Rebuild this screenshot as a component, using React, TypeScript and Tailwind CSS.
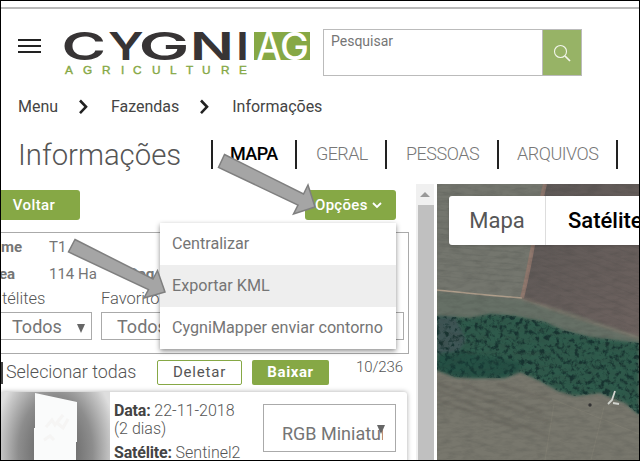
import React from "react";

const crumbs = ["Menu", "Fazendas", "Informações"];

function Logo() {
  return (
    <svg width="250" height="48" viewBox="62 29 250 48" className="ml-[21px] mt-[25px] shrink-0 overflow-visible">
      <g fontFamily="Inter, sans-serif" fontWeight="600" fontSize="38.5" fill="#373435">
        <text transform="translate(61.5 59.8) scale(1.57 1)">C</text>
        <text transform="translate(108 59.8) scale(1.3 1)">Y</text>
        <text transform="translate(138.5 59.8) scale(1.77 1)">G</text>
        <text transform="translate(190 59.8) scale(1.5 1)">N</text>
        <text transform="translate(236 59.8) scale(1.22 1)">I</text>
      </g>
      <rect x="254" y="32" width="56" height="28" fill="#86a845" />
      <g fontFamily="Inter, sans-serif" fontSize="37.500" fontWeight="500" fill="#fff">
        <text x="256.500" y="59.8" textLength="25" lengthAdjust="spacingAndGlyphs">A</text>
        <text x="280" y="59.8" textLength="29" lengthAdjust="spacingAndGlyphs">G</text>
      </g>
      <text x="65 83 102 121 133 152 170 186 202 221 239" y="74" fontFamily="Liberation Sans, sans-serif" fontSize="11.8" fill="#86a845" stroke="#86a845" strokeWidth=".4">AGRICULTURE</text>
    </svg>
  );
}

function Header() {
  return (
    <header className="flex h-[78px] items-start">
      <div className="ml-[17px] mt-[35px] flex w-[23px] shrink-0 flex-col gap-[4px] [&>i]:h-[2px] [&>i]:bg-[#222]">
        <i /><i /><i />
      </div>
      <Logo />
      <div className="ml-[11px] mt-[25px] flex h-[47px] w-[259px] shrink-0 border border-[#bbb]">
        <div className="flex-1 pl-[7px] pt-[2px] text-[14px] leading-[18px] text-[#757575]">Pesquisar</div>
        <div className="flex w-[39px] items-center justify-center border-l border-[#bbb] bg-[#97b366]">
          <svg width="18" height="18" viewBox="0 0 18 18" fill="none" stroke="#f2f6eb" strokeWidth="1.1">
            <circle cx="7.5" cy="7.500" r="6" /><path d="M12 12 17 17" strokeWidth="1.7" />
          </svg>
        </div>
      </div>
    </header>
  );
}

function Breadcrumbs() {
  return (
    <nav className="ml-[17px] mt-[14px] flex h-[22px] items-center text-[16px] text-[#444]">
      {crumbs.map((c, i) => (
        <React.Fragment key={c}>
          {i > 0 && (
            <svg width="11" height="16" viewBox="0 0 11 16" className="ml-[20px] mr-[22px]" fill="none" stroke="#222" strokeWidth="2.6"><path d="m2 1.5 6 6.3-6 6.3" /></svg>
          )}
          <span className="tracking-[-0.02px]">{c}</span>
        </React.Fragment>
      ))}
    </nav>
  );
}

function Titles() {
  return (
    <div className="mt-[20px] flex h-[45px] items-start">
      <h1 className="ml-[17px] w-[193px] text-[29.3px] font-light leading-[35px] text-[#555]">Informações</h1>
      <div className="mt-[2px] flex h-[29px] items-center text-[18px] font-light leading-[28px] text-[#777]">
        <span className="h-full w-[84px] border-l-2 border-[#222] pl-[17px] font-medium text-black"><span className="tracking-[-0.6px]">MAPA</span></span>
        <span className="h-full w-[90px] border-l-2 border-[#222] pl-[19px] tracking-[-0.6px]">GERAL</span>
        <span className="h-full w-[112px] border-l-2 border-[#222] pl-[19px] tracking-[-0.5px]">PESSOAS</span>
        <span className="h-full w-[119px] border-l-2 border-[#222] pl-[18px] tracking-[-0.5px]">ARQUIVOS</span>
        <span className="h-full w-[2px] bg-[#222]" />
      </div>
    </div>
  );
}

function Filters() {
  return (
    <section className="mt-[12px] h-[122px] w-[408px] border-y border-r border-[#aaa] text-[#757575]">
      <div className="flex h-[28px] items-center text-[15px]"><b className="w-[48px] font-bold">me</b><span>T1</span></div>
      <div className="flex h-[26px] items-center text-[15px]"><b className="-ml-[2px] w-[50px] font-bold">ea</b><span className="w-[79px]">114 Ha</span><b className="font-bold">Reg</b></div>
      <div className="flex h-[25px] items-center text-[16.5px] font-light text-[#555]"><span className="w-[100px] pl-[1px]">télites</span><span>Favoritos</span></div>
      <div className="flex gap-[9px] text-[18px]">
        <div className="flex h-[28px] w-[91px] items-center border-y border-r border-[#aaa] pl-[11px]"><span className="w-[65px]">Todos</span><span className="mt-1 h-0 w-0 border-x-[4.5px] border-t-[9px] border-x-transparent border-t-[#666]" /></div>
        <div className="flex h-[28px] w-[303px] items-center border border-[#aaa] pl-[15px]">Todos</div>
      </div>
    </section>
  );
}

function Card() {
  return (
    <section className="mt-[6px] flex h-[80px] w-[406px] rounded-tr-[3px] bg-white shadow-[0_0_5px_#aaa]">
      <div className="h-full w-[109px] shrink-0 bg-[radial-gradient(ellipse_62px_95px_at_50%_75%,#666_20%,#8d8d8d_60%,#c8c8c8_90%,#dedede)]">
        <svg width="109" height="80" viewBox="0 0 109 80">
          <path d="m34 1 42 9v40h-1v30H33V36h1Z" fill="#fafbfb" />
          <path d="m45 35 6-7 3 5 8-10M43 48l6-4 4 4M55 30l7 6 5-9" stroke="#f1efee" strokeWidth="3" fill="none" opacity=".5" />
        </svg>
      </div>
      <div className="ml-[4px] mt-[10px] w-[149px] text-[16px] font-light leading-[18px] text-[#555]">
        <p><b className="font-bold tracking-[-0.2px] text-[#444]">Data:</b> 22-11-2018</p><p>(2 dias)</p>
        <p className="mt-[6px] whitespace-nowrap"><b className="font-bold tracking-[-0.2px] text-[#444]">Satélite:</b> Sentinel2</p>
      </div>
      <div className="w-[133px]">
        <div className="mt-[12px] flex h-[48px] items-start border border-[#aaa] pl-[18px] pt-[15px] text-[18px] leading-[28px] text-[#757575]">
          <span className="w-[101px] shrink-0 overflow-hidden whitespace-nowrap">RGB Miniatura</span><span className="-ml-[6px] mt-[5px] h-0 w-0 shrink-0 border-x-[4.5px] border-t-[9px] border-x-transparent border-t-[#666]" />
        </div>
        <div className="ml-[41px] mt-[8px] h-[10px] w-[92px] rounded bg-[#c5c9a5]" />
      </div>
    </section>
  );
}

function SidePanel() {
  return (
    <aside className="w-[415px] shrink-0 overflow-hidden">
      <div className="mt-[6px] flex h-[30px] justify-between pr-[20px] text-[15px] font-medium text-white">
        <button className="w-[79px] rounded-r-[3px] bg-[#86a845] pr-[13px] tracking-[0.4px]">Voltar</button>
        <button className="flex w-[91px] items-center rounded-[3px] bg-[#86a845] pl-[10px] tracking-[0.3px]">Opções<svg className="ml-[4px] mt-[1px]" width="10" height="8" fill="none" stroke="#fff" strokeWidth="1.800"><path d="m1 1 4 4 4-4" /></svg></button>
      </div>
      <Filters />
      <div className="mt-[5px] flex h-[27px] items-center text-[#555]">
        <i className="h-[22px] w-[2px] shrink-0 bg-[#444]" />
        <span className="ml-[3px] w-[151px] text-[17.9px] font-light">Selecionar todas</span>
        <span className="flex h-[25px] w-[85px] items-center justify-center rounded-[2px] border border-[#86a845] text-[15px] tracking-[0.8px]">Deletar</span>
        <span className="ml-[10px] flex h-[25px] w-[77px] items-center justify-center rounded-[2px] bg-[#86a845] text-[15px] font-bold tracking-[0.6px] text-white">Baixar</span>
        <span className="mb-[10px] ml-[27px] text-[15px] font-light tracking-[-0.1px]">10/236</span>
      </div>
      <Card />
    </aside>
  );
}

function SatelliteMap() {
  const trees = "M437 316 470 318 490 314 515 316 545 322 562 330 590 337 639 343V415L625 403 600 393 575 396 558 391 540 381 520 372 505 378 475 378 455 377 437 370Z";
  return (
    <svg width="202" height="276" viewBox="437 184 202 276" className="block">
      <defs>
        <filter id="grain" x="0" y="0" width="1" height="1" colorInterpolationFilters="sRGB"><feTurbulence type="fractalNoise" baseFrequency=".08 .25" numOctaves="4" seed="4" /><feColorMatrix values="0 0 0 0 .2  0 0 0 0 .21  0 0 0 0 .2  1.2 1 0 0 -.9" /></filter>
        <filter id="foliage" x="0" y="0" width="1" height="1" colorInterpolationFilters="sRGB"><feTurbulence type="fractalNoise" baseFrequency=".2" numOctaves="4" seed="8" /><feColorMatrix values="0 0 0 0 .09  0 0 0 0 .2  0 0 0 0 .19  3 2 0 0 -2.4" /><feComposite in2="SourceGraphic" operator="in" /><feGaussianBlur stdDeviation=".5" /></filter>
        <filter id="soft" x="-.1" y="-.1" width="1.2" height="1.2"><feGaussianBlur stdDeviation="1.5" /></filter>
        <linearGradient id="soil" x1="0" y1="0" x2="1" y2="1"><stop stopColor="#5c5755" /><stop offset="1" stopColor="#6d625f" /></linearGradient>
      </defs>
      <path fill="#78776d" d="M437 184h202v276H437z" />
      <path fill="#74766e" d="M437 184h106l-23 117-83-11z" />
      <path fill="url(#soil)" d="M545 184h94v153l-69-22-47-16z" />
      <path d="M437 291 521 299 570 313 639 337V354L560 336 500 322H437Z" fill="#666f66" filter="url(#soft)" />
      <path d="M545 184c-9 36-12 70-23 114" stroke="#94796e" strokeWidth="4" fill="none" opacity=".85" />
      <path d="m437 290 50 5 35 3" stroke="#b1a08d" strokeWidth="1.4" fill="none" />
      <path d="m522 298 48 17 69 23" stroke="#8c7c70" strokeWidth="2" fill="none" opacity=".7" filter="url(#soft)" />
      <g stroke="#53504e" opacity=".15">{Array.from({ length: 15 }, (_, i) => <path key={i} d={`m${550 - i} ${187 + i * 7} ${90 + i} ${30 + i}`} />)}</g>
      <g stroke="#555b55" opacity=".15">{Array.from({ length: 15 }, (_, i) => <path key={i} d={`m437 ${192 + i * 6} 88 7`} />)}</g>
      <path d={trees} fill="#2d5a4b" filter="url(#soft)" />
      <path d="M437 317H455L466 340 458 352 437 354Z" fill="#45525a" opacity=".7" filter="url(#soft)" />
      <path d={trees} fill="#132f29" filter="url(#foliage)" />
      <path d="M437 355 465 352 522 363 518 372 505 377 475 378 455 377 437 370Z" fill="#17423a" opacity=".4" filter="url(#soft)" />
      <g stroke="#59564f" strokeWidth="2" opacity=".5" filter="url(#soft)"><path d="m437 383 113 39M437 390l112 47M438 400l80 29M497 383l54 18M461 383l82 30" /></g>
      <g stroke="#918d7e" opacity=".3"><path d="m554 404-9 56M604 407l-13 53M552 399l87 35" /></g>
      <rect x="437" y="184" width="202" height="276" filter="url(#grain)" opacity=".22" />
      <circle cx="590" cy="405" r="1.700" fill="#333" />
      <path d="m615 391-3 9-4 4m5-1 6 1" stroke="#d1d4ce" strokeWidth="1.800" fill="none" />
    </svg>
  );
}

export default function App() {
  return (
    <main className="relative h-[461px] w-[640px] overflow-hidden border border-black bg-white font-['Roboto',sans-serif]">
      <div className="mt-[6px] h-[2px] bg-[#b9b9b9]" />
      <div className="-mt-[5px]"><Header /></div>
      <Breadcrumbs />
      <Titles />
      <div className="mt-[1px] flex h-[276px]">
        <SidePanel />
        <div className="mr-[3px] w-[18px] shrink-0 bg-[#f0f0f0]">
          <div className="flex h-[21px] items-center justify-center"><i className="h-0 w-0 border-x-[5px] border-b-[5px] border-x-transparent border-b-[#999]" /></div>
          <div className="ml-[2px] h-[255px] bg-[#c0c0c0]" />
        </div>
        <div className="relative w-[202px] overflow-hidden">
          <SatelliteMap />
          <div className="absolute left-[12px] top-[12px] flex h-[49px] w-[220px] items-center rounded-[3px] bg-white text-[22px] shadow-sm">
            <span className="flex h-full w-[97px] items-center justify-center border-r border-[#ddd] text-[#565656]">Mapa</span>
            <span className="pl-[22px] font-medium text-black">Satélite</span>
          </div>
        </div>
      </div>
      <div className="absolute left-[159px] top-[222px] w-[236px] bg-white text-[16.15px] text-[#757575] shadow-[0_2px_5px_rgba(0,0,0,.45)]">
        <div className="flex h-[42px] items-center pl-[12px]">Centralizar</div>
        <div className="flex h-[42px] items-center bg-[#eee] pl-[12px]">Exportar KML</div>
        <div className="flex h-[42px] items-center whitespace-nowrap pl-[12px]">CygniMapper enviar contorno</div>
      </div>
      <svg className="absolute -left-px -top-px" width="640" height="461" fill="#a5a5a5" stroke="#7f7f7f" strokeWidth="1.5">
        <path d="m224.5 154.5 79 39.500 4.500-9 7 22-21.500 7 4.500-9-79.500-37.500Z" />
        <path d="m75 239.500 78 39.500 4.500-8.500 7.500 21.500-21 6 4.500-8.500-80-37.500Z" />
      </svg>
    </main>
  );
}
